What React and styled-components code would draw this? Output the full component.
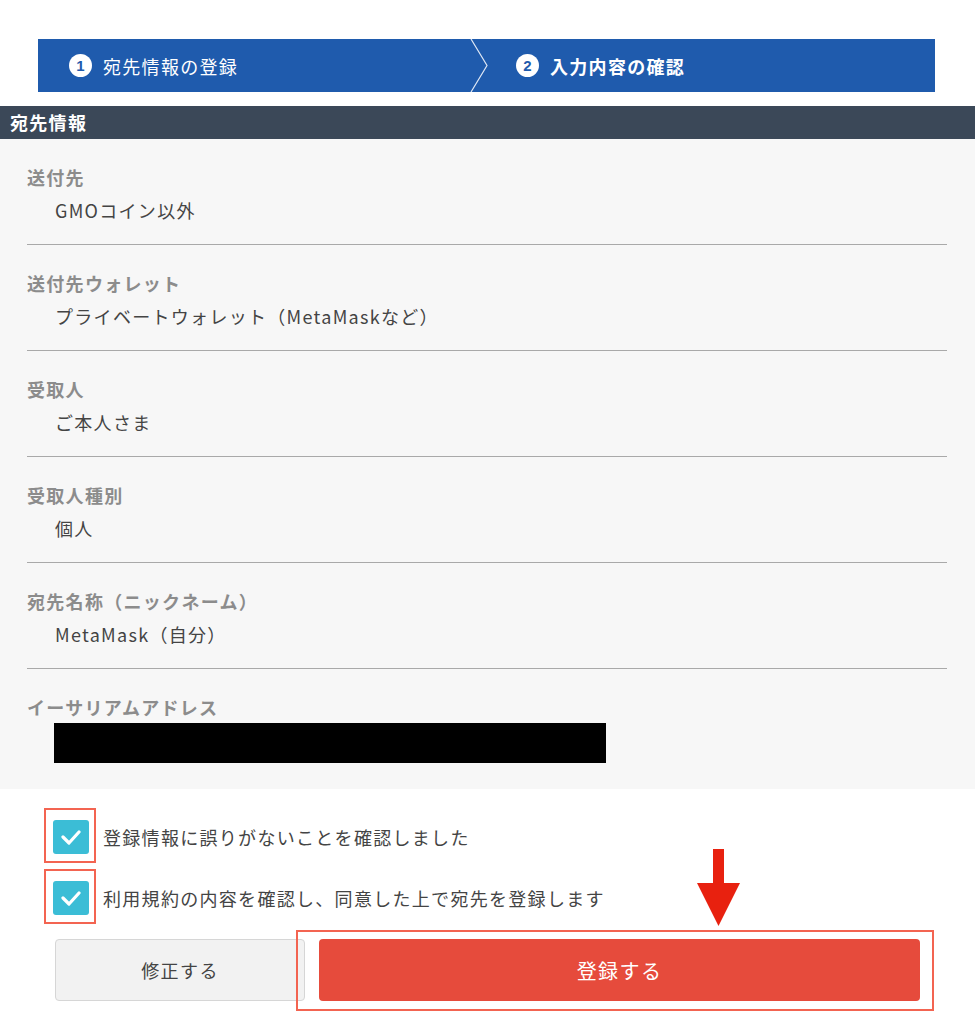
import React from 'react'
import styled, { createGlobalStyle } from 'styled-components'

const Global = createGlobalStyle`
*, *::before, *::after {
  box-sizing: border-box;
}
body {
  margin: 0;
  background: #fff;
  font-family: "Noto Sans CJK JP", "Noto Sans", sans-serif;
  color: #444;
}
`

const Page = styled.div`
width: 975px;
padding-top: 39px;
padding-bottom: 23px;
`

const Stepper = styled.div`
display: flex;
margin: 0 40px 0 38px;
height: 53px;
background: #1f5bad;
`

const Step = styled.div`
position: relative;
display: flex;
align-items: center;
gap: 11px;
flex: ${p => (p.first ? '0 0 442px' : '1')};
padding-left: ${p => (p.first ? '31px' : '36px')};
color: #fff;
font-size: 18px;
letter-spacing: 1.3px;
font-weight: ${p => (p.active ? 700 : 400)};
`

const Chevron = styled.svg`
position: absolute;
right: -10px;
top: 0;
`

const StepNum = styled.span`
display: inline-flex;
align-items: center;
justify-content: center;
width: 23px;
height: 23px;
border-radius: 50%;
background: #fff;
color: #1f5bad;
font-family: "Liberation Sans", sans-serif;
font-weight: 700;
font-size: 15px;
letter-spacing: 0;
`

const SectionHead = styled.div`
margin-top: 14px;
height: 33px;
background: #3b4858;
color: #fff;
font-size: 18px;
font-weight: 700;
letter-spacing: 1.3px;
line-height: 33px;
padding-left: 10px;
`

const Details = styled.div`
background: #f7f7f7;
padding: 0 28px 26px 27px;
`

const Row = styled.div`
padding: 25px 0 ${p => (p.last ? '0' : '21px')};
border-bottom: ${p => (p.last ? 'none' : '1px solid #a9a9a9')};
`

const Label = styled.div`
color: #8c8c8c;
font-weight: 700;
font-size: 18px;
letter-spacing: 1.3px;
line-height: 26px;
`

const Value = styled.div`
margin-top: 7px;
padding-left: 28px;
color: #444;
font-size: 18px;
letter-spacing: 1.3px;
line-height: 26px;
`

const Redacted = styled.div`
margin-top: 3px;
margin-left: 27px;
width: 552px;
height: 40px;
background: #000;
`

const Checks = styled.div`
display: flex;
flex-direction: column;
gap: 27px;
padding: 31px 0 0 53px;
`

const CheckRow = styled.label`
display: flex;
align-items: center;
gap: 14px;
height: 34px;
font-size: 18px;
letter-spacing: 1.3px;
color: #444;
`

const Box = styled.span`
position: relative;
display: inline-flex;
align-items: center;
justify-content: center;
width: 36px;
height: 34px;
border-radius: 3px;
background: #3bbdd6;
&::after {
  content: '';
  position: absolute;
  inset: -12px -7px -9px -9px;
  border: 2px solid #f36451;
}
`

const Actions = styled.div`
position: relative;
display: flex;
gap: 14px;
margin: 24px 0 0 55px;
width: 865px;
`

const Button = styled.button`
position: relative;
height: 62px;
border-radius: 4px;
font-family: inherit;
letter-spacing: 1.4px;
cursor: pointer;
${p =>
  p.primary
    ? `
  flex: 1;
  background: #e64b3c;
  border: none;
  color: #fff;
  font-size: 20px;
  &::after {
    content: '';
    position: absolute;
    inset: -9px -14px -10px -23px;
    border: 2px solid #f36451;
  }
`
    : `
  flex: 0 0 250px;
  background: #f2f2f2;
  border: 1px solid #d6d6d6;
  color: #444;
  font-size: 18px;
`}
`

const Arrow = styled.svg`
position: absolute;
left: 642px;
top: -90px;
`

const rows = [
  ['送付先', 'GMOコイン以外'],
  ['送付先ウォレット', 'プライベートウォレット（MetaMaskなど）'],
  ['受取人', 'ご本人さま'],
  ['受取人種別', '個人'],
  ['宛先名称（ニックネーム）', 'MetaMask（自分）'],
]

const Check = () => (
  <svg width="22" height="16" viewBox="0 0 22 16">
    <path d="M3 8l6 6L19 3" fill="none" stroke="#fff" strokeWidth="3.2" strokeLinecap="round" strokeLinejoin="round" />
  </svg>
)

const App = () => {
  return (
    <Page>
      <Global />
      <Stepper>
        <Step first>
          <StepNum>1</StepNum>
          宛先情報の登録
          <Chevron width="20" height="53" viewBox="0 0 20 53">
            <path d="M1 0L17 26.5L1 53" fill="none" stroke="#dfe8f5" strokeWidth="1.2" />
          </Chevron>
        </Step>
        <Step active>
          <StepNum>2</StepNum>
          入力内容の確認
        </Step>
      </Stepper>
      <SectionHead>宛先情報</SectionHead>
      <Details>
        {rows.map(([label, value]) => (
          <Row key={label}>
            <Label>{label}</Label>
            <Value>{value}</Value>
          </Row>
        ))}
        <Row last>
          <Label>イーサリアムアドレス</Label>
          <Redacted />
        </Row>
      </Details>
      <Checks>
        <CheckRow>
          <Box><Check /></Box>
          登録情報に誤りがないことを確認しました
        </CheckRow>
        <CheckRow>
          <Box><Check /></Box>
          利用規約の内容を確認し、同意した上で宛先を登録します
        </CheckRow>
      </Checks>
      <Actions>
        <Button>修正する</Button>
        <Button primary>登録する</Button>
        <Arrow width="44" height="78" viewBox="0 0 44 78">
          <path d="M16 0H27V34H43L21.5 77L0 34H16Z" fill="#e8210f" />
        </Arrow>
      </Actions>
    </Page>
  )
}

export default App
